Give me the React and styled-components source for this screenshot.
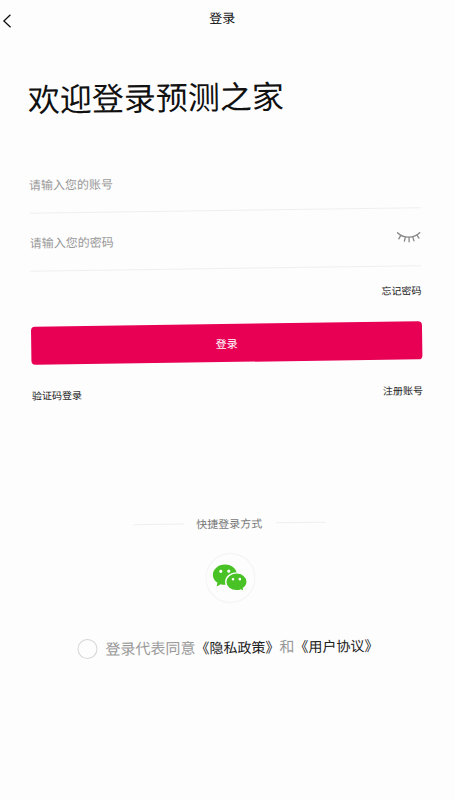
import React, { useState } from "react";

import styled, { createGlobalStyle, css } from "styled-components";

const GlobalStyle = createGlobalStyle`
  * {
    box-sizing: border-box;
  }
  body {
    margin: 0;
    background: #fdfdfd;
    color: #111;
    font-family: "Noto Sans CJK SC", "Noto Sans", sans-serif;
    overflow-x: hidden;
  }
  button, input {
    font-family: inherit;
  }
`;

// the whole screen leans slightly to the left
const Screen = styled.div`
  min-height: 100vh;
  overflow: hidden;
  transform: rotate(-0.8deg);
`;

const Header = styled.header`
  display: grid;
  grid-template-columns: 40px 1fr 40px;
  align-items: center;
  height: 36px;
`;

const IconButton = styled.button`
  display: flex;
  align-items: center;
  padding: 0;
  border: 0;
  background: none;
  cursor: pointer;
  ${props => props.$back && css`
    padding-left: 8px;
  `}
  ${props => props.$round && css`
    justify-content: center;
    width: 50px;
    height: 50px;
    margin: 20px auto 0;
    border: 1px solid #f3f3f3;
    border-radius: 50%;
  `}
`;

const HeaderTitle = styled.div`
  font-size: 13px;
  line-height: 20px;
  text-align: center;
`;

const Content = styled.main`
  padding: 35px 32px 0;
`;

const Title = styled.h1`
  margin: 0 0 34px;
  font-size: 32px;
  font-weight: 400;
  line-height: 48px;
`;

const Field = styled.div`
  display: flex;
  align-items: center;
  height: 58px;
  border-bottom: 1px solid #efefef;
`;

const Input = styled.input`
  flex: 1;
  min-width: 0;
  height: 20px;
  padding: 0;
  border: 0;
  outline: 0;
  background: none;
  color: #111;
  font-size: 12px;
  line-height: 20px;
  &::placeholder {
    color: #999;
    opacity: 1;
  }
`;

const Links = styled.div`
  display: flex;
  justify-content: ${props => props.$end ? "flex-end" : "space-between"};
  padding-top: ${props => props.$end ? 16 : 23}px;
`;

const Link = styled.a`
  color: #222;
  font-size: 10px;
  line-height: 16px;
  text-decoration: none;
`;

const Submit = styled.button`
  display: block;
  width: 100%;
  height: 38px;
  margin-top: 23px;
  padding: 0;
  border: 0;
  border-radius: 4px;
  background: #e80055;
  color: white;
  font-size: 11px;
  line-height: 20px;
  cursor: pointer;
`;

const Divider = styled.div`
  display: flex;
  align-items: center;
  justify-content: center;
  gap: 13px;
  margin-top: 112px;
  color: #777;
  font-size: 11px;
  line-height: 20px;
  &::before, &::after {
    content: "";
    width: 50px;
    height: 1px;
    background: #efefef;
  }
`;

const Agreement = styled.div`
  display: flex;
  align-items: center;
  justify-content: center;
  gap: 8px;
  margin-top: 32px;
  padding-right: 6px;
`;

const Check = styled.input`
  appearance: none;
  flex: none;
  width: 20px;
  height: 20px;
  margin: 0;
  border: 1px solid #d6d6d6;
  border-radius: 50%;
  &:checked {
    border: 6px solid #e80055;
  }
`;

const AgreementText = styled.label`
  color: #999;
  font-size: 15px;
  line-height: 24px;
  white-space: nowrap;
  ${Link} {
    font-size: 14px;
    line-height: 24px;
  }
`;

const BackIcon = () => (
  <svg width="9" height="14" viewBox="0 0 9 14" fill="none" stroke="#111" strokeWidth="1.3">
    <path d="M7.8 .7 1.2 7l6.6 6.3" />
  </svg>
);

const ClosedEyeIcon = () => (
  <svg width="24" height="12" viewBox="0 0 24 12" fill="none" stroke="#888" strokeWidth="1.3" strokeLinecap="round">
    <path d="M.8 1.2C6.6 7.2 17.4 7.2 23.2 1.2" />
    <path d="M4 4 2 7.2M8.6 5.6 7.6 9.6M12.3 6v4.3M16 5.5l1.2 4M20.2 3.8l2 3" />
  </svg>
);

const WechatIcon = () => (
  <svg width="35" height="28" viewBox="0 0 35 28">
    <path
      fill="#48c224"
      d="M12.6.5C5.9.5.4 5.1.4 10.8c0 3.3 1.8 6 4.5 7.9l-.9 3.7 4.2-2.2c1.3.4 2.8.6 4.4.6 6.7 0 12-4.5 12-10.1C24.6 5.1 19.3.5 12.6.5Z"
    />
    <path
      fill="#48c224"
      stroke="#fdfdfd"
      strokeWidth="1.4"
      d="M24 9C18 9 13.2 13 13.2 18s4.8 8.9 10.8 8.9c1.5 0 2.8-.2 4.1-.7l3.5 1.7-.8-3.3c2.2-1.6 3.8-3.9 3.8-6.6C34.6 13 30 9 24 9Z"
    />
    <circle cx="8.4" cy="7.2" r="1.6" fill="white" />
    <circle cx="16.4" cy="7.2" r="1.6" fill="white" />
    <circle cx="20.5" cy="15.3" r="1.3" fill="white" />
    <circle cx="27.3" cy="15.3" r="1.3" fill="white" />
  </svg>
);

const App = () => {
  const [visible, setVisible] = useState(false);

  return (
    <>
      <GlobalStyle />
      <Screen>
        <Header>
          <IconButton $back aria-label="返回"><BackIcon /></IconButton>
          <HeaderTitle>登录</HeaderTitle>
        </Header>
        <Content>
          <Title>欢迎登录预测之家</Title>
          <form onSubmit={e => e.preventDefault()}>
            <Field>
              <Input type="text" aria-label="账号" placeholder="请输入您的账号" />
            </Field>
            <Field>
              <Input
                type={visible ? "text" : "password"}
                aria-label="密码"
                placeholder="请输入您的密码"
              />
              <IconButton type="button" aria-label="显示密码" onClick={() => setVisible(!visible)}>
                <ClosedEyeIcon />
              </IconButton>
            </Field>
            <Links $end>
              <Link href="#forgot">忘记密码</Link>
            </Links>
            <Submit type="submit">登录</Submit>
          </form>
          <Links>
            <Link href="#code">验证码登录</Link>
            <Link href="#register">注册账号</Link>
          </Links>
          <Divider>快捷登录方式</Divider>
          <IconButton $round aria-label="微信登录"><WechatIcon /></IconButton>
          <Agreement>
            <Check type="checkbox" id="agree" />
            <AgreementText htmlFor="agree">
              登录代表同意<Link href="#privacy">《隐私政策》</Link>和<Link href="#terms">《用户协议》</Link>
            </AgreementText>
          </Agreement>
        </Content>
      </Screen>
    </>
  );
};

export default App;
